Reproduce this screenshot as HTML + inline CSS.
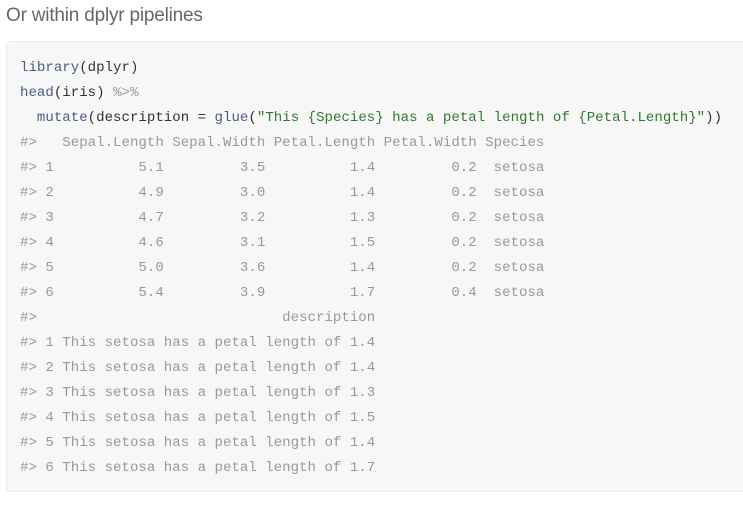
<!DOCTYPE html>
<html><head><meta charset="utf-8"><style>
body{margin:0;background:#fff;width:743px;height:518px;overflow:hidden;font-family:"Liberation Sans",sans-serif}
h3{position:absolute;left:6px;top:5px;margin:0;font-weight:normal;font-size:19px;color:#666;letter-spacing:-0.2px}
.box{position:absolute;left:6px;top:41px;width:745px;height:451px;background:#f7f7f7;border:1px solid #ececec;border-radius:3px;box-sizing:border-box}
pre{position:absolute;left:20px;top:56px;margin:0;font-family:"Liberation Mono",monospace;font-size:14.1px;line-height:25px;color:#333}
.f{color:#4b5b88}.s{color:#2f7a2f}.o{color:#999}.c{color:#999}
</style></head><body>
<h3>Or within dplyr pipelines</h3>
<div class="box"></div>
<pre><span class="f">library</span>(dplyr)
<span class="f">head</span>(iris) <span class="o">%&gt;%</span>
  <span class="f">mutate</span>(description = <span class="f">glue</span>(<span class="s">"This {Species} has a petal length of {Petal.Length}"</span>))
<span class="c">#&gt;   Sepal.Length Sepal.Width Petal.Length Petal.Width Species
#&gt; 1          5.1         3.5          1.4         0.2  setosa
#&gt; 2          4.9         3.0          1.4         0.2  setosa
#&gt; 3          4.7         3.2          1.3         0.2  setosa
#&gt; 4          4.6         3.1          1.5         0.2  setosa
#&gt; 5          5.0         3.6          1.4         0.2  setosa
#&gt; 6          5.4         3.9          1.7         0.4  setosa
#&gt;                             description
#&gt; 1 This setosa has a petal length of 1.4
#&gt; 2 This setosa has a petal length of 1.4
#&gt; 3 This setosa has a petal length of 1.3
#&gt; 4 This setosa has a petal length of 1.5
#&gt; 5 This setosa has a petal length of 1.4
#&gt; 6 This setosa has a petal length of 1.7</span></pre>
</body></html>
